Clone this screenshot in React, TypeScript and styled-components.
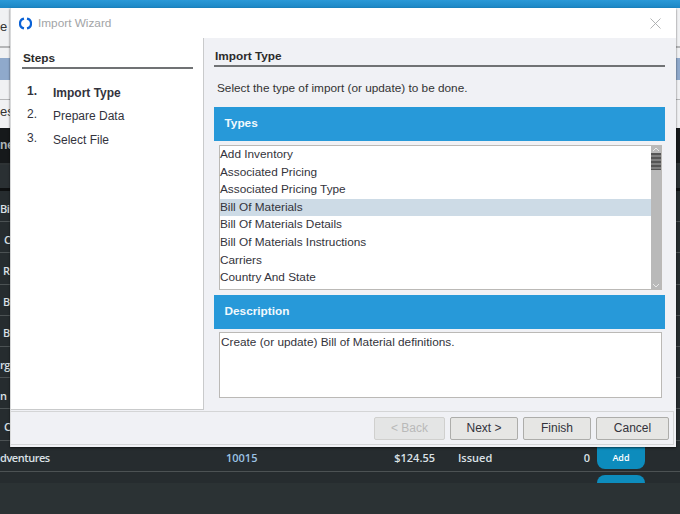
import React from "react";
import styled, { createGlobalStyle } from "styled-components";

const Global = createGlobalStyle`
  html, body { margin: 0; padding: 0; background: #2b3234; }
  * { box-sizing: border-box; }
`;

const Page = styled.div`
  position: relative;
  width: 680px;
  height: 514px;
  overflow: hidden;
  background: #2b3234;
  font-family: "Liberation Sans", Arial, sans-serif;
`;

const TopBar = styled.div`
  height: 8px;
  background: linear-gradient(#2a99d8, #1c86c4);
`;

const LightBand = styled.div`
  height: 120px;
  background: #f0f1f3;
  padding-top: 11px;
  display: flex;
  flex-direction: column;
  font-size: 13px;
  color: #333;
`;

const CropLabel = styled.span`
  height: 29px;
  line-height: 16px;
  border-bottom: 2px solid #b5b6b8;
`;

const SelectedRow = styled.div`
  margin-top: 10px;
  height: 22px;
  background: #8fa9cb;
`;

const DividerLabel = styled.span`
  margin-top: 19px;
  height: 22px;
  padding-top: 4px;
  line-height: 16px;
  border-top: 1px solid #b5b6b8;
`;

const HeadBand = styled.div`
  height: 37px;
  background: #16191b;
  color: #aeb4b8;
  font-size: 12px;
  font-weight: 700;
  line-height: 34px;
  border-bottom: 2px solid #2e3335;
`;

const FilterBand = styled.div`
  height: 26px;
  background: #2a3033;
  border-bottom: 3px solid #0e1011;
`;

const Rows = styled.div`
  height: 281px;
  background: #262c2f;
`;

const Row = styled.div`
  height: 31.2px;
  padding-top: 4px;
  display: flex;
  align-items: center;
  border-bottom: 1px solid #4c5254;
  color: #dbe1e6;
  font-family: "Open Sans", "Liberation Sans", sans-serif;
  font-size: 11px;
  font-weight: 600;
`;

const NameCell = styled.span<{ $indent: number }>`
  width: 226px;
  flex: none;
  padding-left: ${(p) => p.$indent}px;
  letter-spacing: -0.45px;
`;

const IdCell = styled.span`
  width: 150px;
  flex: none;
  color: #9cc3e4;
  font-weight: 600;
`;

const AmountCell = styled.span`
  width: 59px;
  flex: none;
  text-align: right;
`;

const StatusCell = styled.span`
  width: 70px;
  flex: none;
  margin-left: 23px;
`;

const CountCell = styled.span`
  width: 62px;
  flex: none;
  text-align: right;
`;

const AddButton = styled.span`
  margin-left: 7px;
  width: 48px;
  height: 24px;
  align-self: flex-start;
  border-radius: 0 0 8px 8px;
  background: #0d8cbd;
  color: #fff;
  font-size: 9px;
  line-height: 26px;
  text-align: center;
`;

const PeekRow = styled.div`
  height: 11px;
  padding: 3px 0 0 597px;
  background: #262c2f;
`;

const PeekButton = styled.div`
  width: 48px;
  height: 8px;
  border-radius: 8px 8px 0 0;
  background: #0d8cbd;
`;

const Modal = styled.div`
  position: absolute;
  left: 10px;
  top: 8px;
  width: 666px;
  height: 439px;
  display: flex;
  flex-direction: column;
  background: #f0f1f5;
  border-left: 1px solid #d8d9da;
  box-shadow: 0 1px 2px rgba(0, 0, 0, 0.6);
`;

const TitleBar = styled.div`
  height: 30px;
  flex: none;
  display: flex;
  align-items: center;
  background: #fff;
  padding: 0 15px 0 8px;
  gap: 6px;
`;

const TitleText = styled.span`
  flex: 1;
  font-size: 11.8px;
  color: #a2a4a6;
`;

const Body = styled.div`
  flex: 1;
  min-height: 0;
  display: flex;
`;

const StepsPanel = styled.div`
  width: 193px;
  flex: none;
  margin-bottom: 1px;
  background: #fff;
  border-right: 1px solid #c9cacb;
  border-bottom: 1px solid #c9cacb;
  padding: 15px 10px 0 11px;
`;

const SectionTitle = styled.div`
  height: 16px;
  padding-left: 1px;
  font-size: 11.8px;
  font-weight: 700;
  line-height: 11px;
  color: #2b2b2b;
  border-bottom: 2px solid #707274;
`;

const StepList = styled.ol`
  list-style: none;
  margin: 12px 0 0;
  padding: 0 0 0 5px;
`;

const Step = styled.li<{ $active?: boolean }>`
  height: 23.5px;
  display: flex;
  align-items: center;
  font-size: 12px;
  color: #33333d;
  font-weight: ${(p) => (p.$active ? 700 : 400)};
`;

const StepNumber = styled.span`
  width: 26px;
  margin-top: -4px;
`;

const ContentPanel = styled.div`
  flex: 1;
  min-width: 0;
  padding: 12.5px 11px 0 10px;
`;

const Lead = styled.div`
  margin: 14px 0 0 3px;
  height: 26.5px;
  font-size: 11.8px;
  line-height: 15px;
  color: #333;
`;

const BlueHead = styled.div`
  height: 34px;
  background: #2799d9;
  color: #f2f9fd;
  font-size: 11.8px;
  font-weight: 700;
  line-height: 33px;
  padding-left: 10.5px;
`;

const ListBox = styled.div`
  margin: 4px 0 5px 5px;
  width: 443px;
  height: 145px;
  display: flex;
  background: #fff;
  border: 1px solid #bbb9b6;
`;

const Items = styled.div`
  flex: 1;
  min-width: 0;
`;

const Item = styled.div<{ $selected?: boolean }>`
  height: 17.6px;
  font-size: 11.8px;
  line-height: 17.6px;
  color: #33333b;
  background: ${(p) => (p.$selected ? "#cddbe6" : "transparent")};
`;

const ScrollBar = styled.div`
  width: 10px;
  flex: none;
  display: flex;
  flex-direction: column;
  background: #b9b9b9;
`;

const ScrollEnd = styled.div`
  height: 7px;
  flex: none;
  display: flex;
`;

const ScrollThumb = styled.div`
  height: 17px;
  flex: none;
  background: repeating-linear-gradient(#555 0, #555 2px, #808080 2px, #808080 4px);
`;

const ScrollGap = styled.div`
  flex: 1;
`;

const DescBox = styled.div`
  margin: 3px 0 0 5px;
  width: 443px;
  height: 66px;
  padding: 2px 1px;
  background: #fff;
  border: 1px solid #bbb9b6;
  font-size: 11.8px;
  line-height: 15px;
  color: #33333b;
`;

const Footer = styled.div`
  height: 34px;
  flex: none;
  margin: 0 2px 2px 0;
  display: flex;
  justify-content: flex-end;
  align-items: center;
  gap: 5px;
  padding-right: 4px;
  border: 1px solid #d4d5d6;
  border-left: none;
  background: #f0f1f5;
`;

const WizardButton = styled.button<{ $w: number }>`
  width: ${(p) => p.$w}px;
  height: 23px;
  padding: 0;
  font-family: inherit;
  font-size: 12px;
  color: #33333b;
  background: #e6e6e4;
  border: 1px solid #adadaa;
  border-radius: 2px;

  &:disabled {
    color: #b9b9b9;
    background: #e4e5e5;
    border-color: #d0d0ce;
  }
`;

const LoopIcon = () => (
  <svg width="13" height="13" viewBox="0 0 13 13" fill="none" stroke="#0a62d6" strokeWidth="2.2">
    <path d="M5 1.6 A5 5 0 0 0 5 11.4" />
    <path d="M8 1.6 A5 5 0 0 1 8 11.4" />
  </svg>
);

const CloseIcon = () => (
  <svg width="11" height="11" viewBox="0 0 11 11" stroke="#a9abad" strokeWidth="0.9">
    <path d="M0.5 0.5 L10.5 10.5 M10.5 0.5 L0.5 10.5" />
  </svg>
);

const Chevron = ({ up }: { up?: boolean }) => (
  <svg width="10" height="7" viewBox="0 0 10 7" fill="none" stroke="#e8e8e8" strokeWidth="1">
    <path d={up ? "M2 5 L5 2 L8 5" : "M2 2 L5 5 L8 2"} />
  </svg>
);

const names: [string, number][] = [
  ["Bik", 0],
  ["C", 4],
  ["R", 3],
  ["B", 3],
  ["B", 3],
  ["rg", 0],
  ["n", 0],
  ["C", 4],
];

const types = [
  "Add Inventory",
  "Associated Pricing",
  "Associated Pricing Type",
  "Bill Of Materials",
  "Bill Of Materials Details",
  "Bill Of Materials Instructions",
  "Carriers",
  "Country And State",
];

export default function App() {
  return (
    <Page>
      <Global />
      <TopBar />
      <LightBand>
        <CropLabel>e</CropLabel>
        <SelectedRow />
        <DividerLabel>es</DividerLabel>
      </LightBand>
      <HeadBand>ne</HeadBand>
      <FilterBand />
      <Rows>
        {names.map(([n, indent], i) => (
          <Row key={i}>
            <NameCell $indent={indent}>{n}</NameCell>
          </Row>
        ))}
        <Row>
          <NameCell $indent={0}>dventures</NameCell>
          <IdCell>10015</IdCell>
          <AmountCell>$124.55</AmountCell>
          <StatusCell>Issued</StatusCell>
          <CountCell>0</CountCell>
          <AddButton>Add</AddButton>
        </Row>
      </Rows>
      <PeekRow>
        <PeekButton />
      </PeekRow>
      <Modal>
        <TitleBar>
          <LoopIcon />
          <TitleText>Import Wizard</TitleText>
          <CloseIcon />
        </TitleBar>
        <Body>
          <StepsPanel>
            <SectionTitle>Steps</SectionTitle>
            <StepList>
              <Step $active>
                <StepNumber>1.</StepNumber>Import Type
              </Step>
              <Step>
                <StepNumber>2.</StepNumber>Prepare Data
              </Step>
              <Step>
                <StepNumber>3.</StepNumber>Select File
              </Step>
            </StepList>
          </StepsPanel>
          <ContentPanel>
            <SectionTitle>Import Type</SectionTitle>
            <Lead>Select the type of import (or update) to be done.</Lead>
            <BlueHead>Types</BlueHead>
            <ListBox>
              <Items>
                {types.map((t) => (
                  <Item key={t} $selected={t === "Bill Of Materials"}>
                    {t}
                  </Item>
                ))}
              </Items>
              <ScrollBar>
                <ScrollEnd>
                  <Chevron up />
                </ScrollEnd>
                <ScrollThumb />
                <ScrollGap />
                <ScrollEnd>
                  <Chevron />
                </ScrollEnd>
              </ScrollBar>
            </ListBox>
            <BlueHead>Description</BlueHead>
            <DescBox>Create (or update) Bill of Material definitions.</DescBox>
          </ContentPanel>
        </Body>
        <Footer>
          <WizardButton $w={71} disabled>
            &lt; Back
          </WizardButton>
          <WizardButton $w={68}>Next &gt;</WizardButton>
          <WizardButton $w={68}>Finish</WizardButton>
          <WizardButton $w={73}>Cancel</WizardButton>
        </Footer>
      </Modal>
    </Page>
  );
}
